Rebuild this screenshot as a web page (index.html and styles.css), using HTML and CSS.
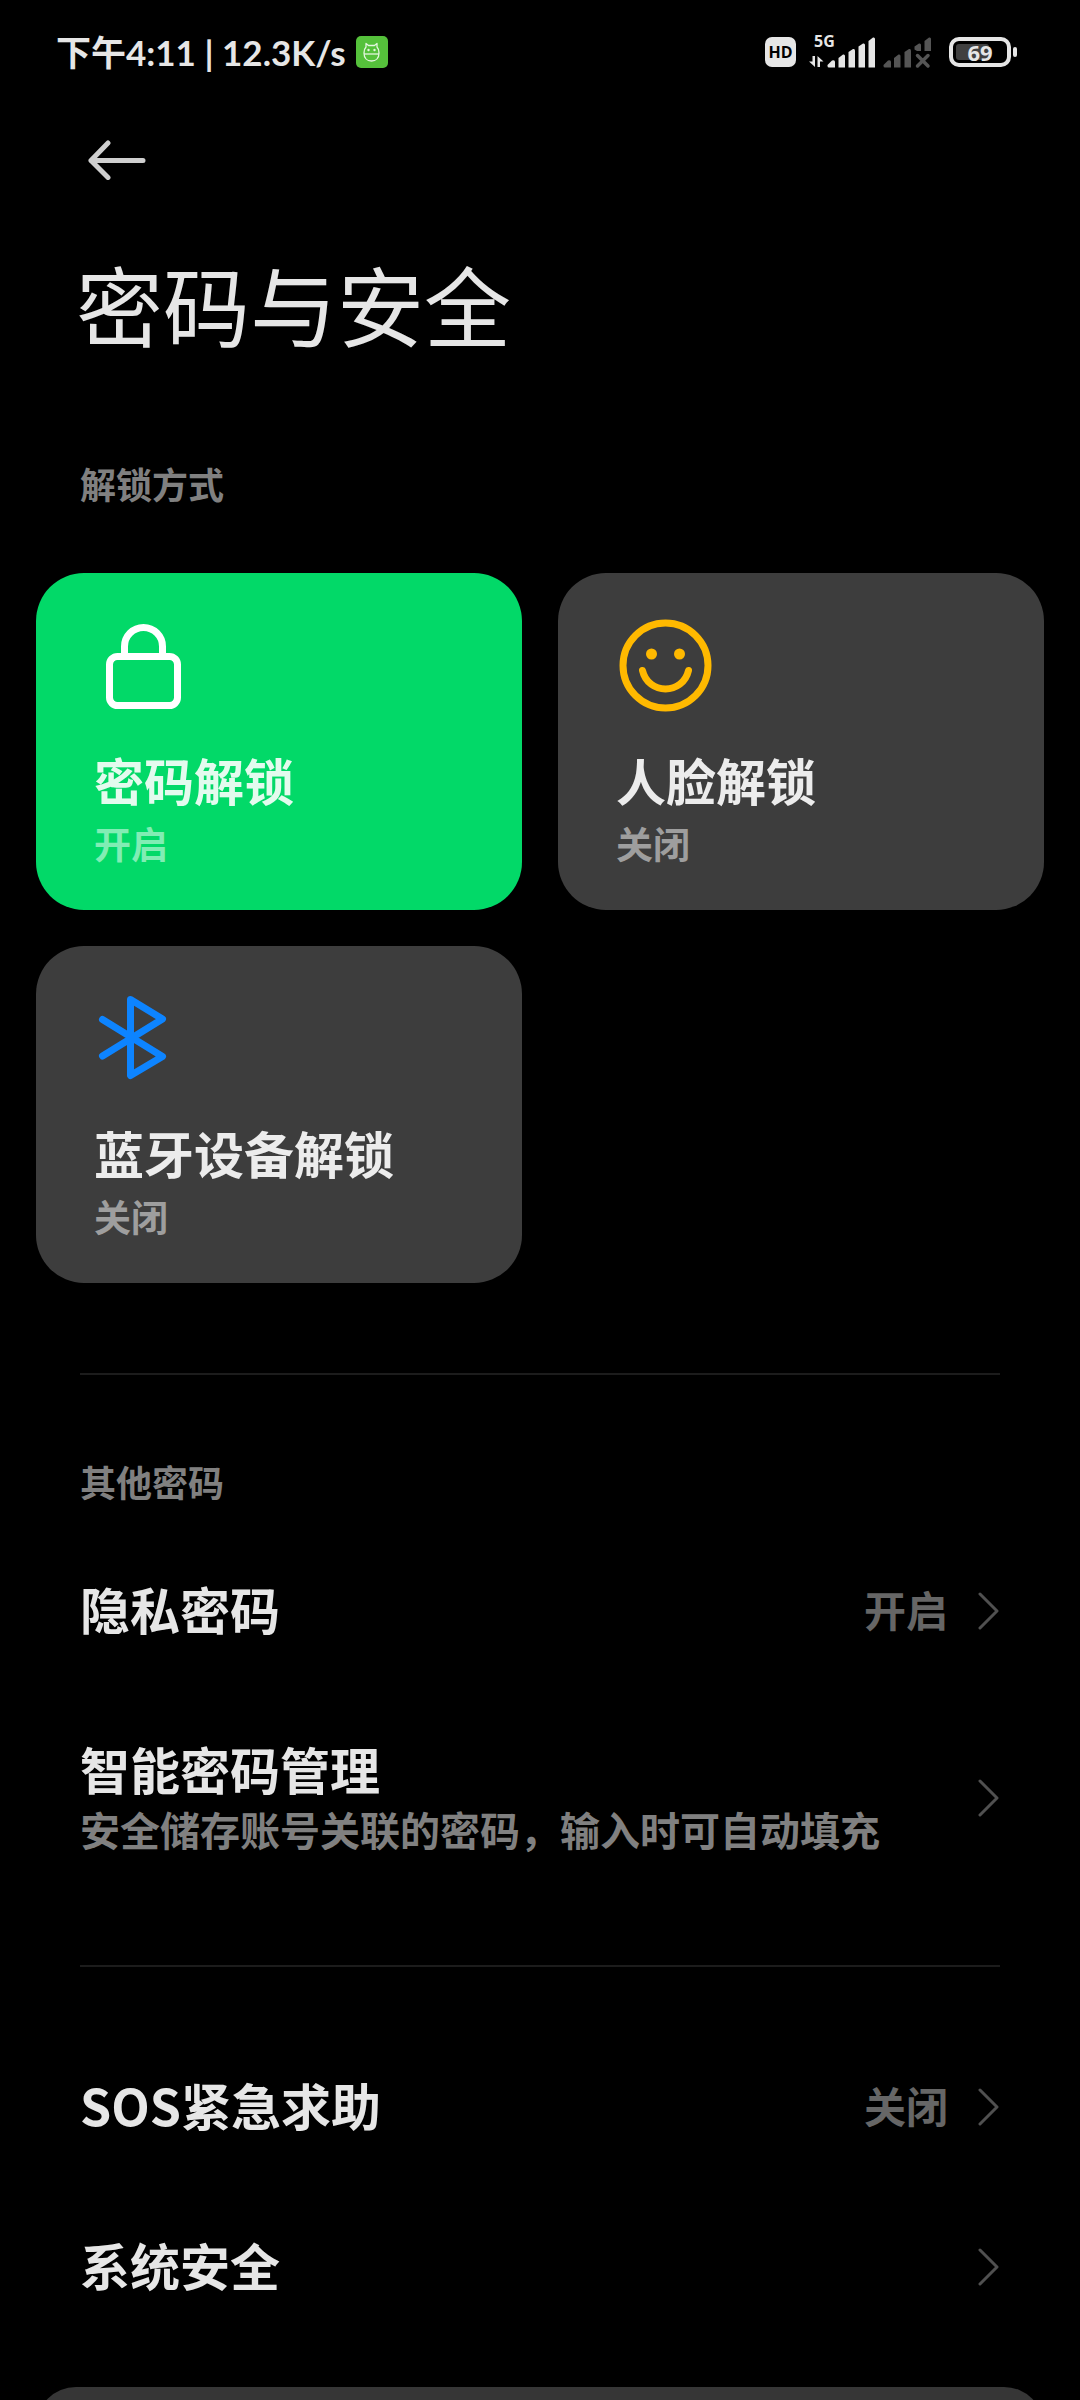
FILE: index.html
```html
<!DOCTYPE html>
<html lang="zh-CN">
<head>
    <meta charset="UTF-8">
    <meta name="viewport" content="width=device-width, initial-scale=1.0">
    <title>密码与安全</title>
    <link rel="stylesheet" href="styles.css">
</head>
<body>
    <div class="status-bar">
        <div class="status-left">
            <span>下午4:11 | 12.3K/s</span>
            <svg class="app-badge" viewBox="0 0 32 32" aria-hidden="true">
                <rect width="32" height="32" rx="5" fill="#55c13b"/>
                <g fill="none" stroke="#e4f6df" stroke-width="1.3" stroke-linejoin="round">
                    <path d="M10 11 L10 7.500 L12.500 9.500 H18.500 L21 7.500 V11 Q23 13 23 17 C23 22 20 25 15.500 25 C11 25 8 22 8 17 Q8 13 10 11Z"/>
                    <path d="M8 18 H23"/>
                </g>
                <circle cx="12.500" cy="14" r="1.200" fill="#e4f6df"/>
                <circle cx="18.500" cy="14" r="1.200" fill="#e4f6df"/>
            </svg>
        </div>
        <div class="status-right">
            <span class="hd">HD</span>
            <svg class="signal" width="68" height="44" viewBox="0 -4 68 44" fill="#e6e6e6">
                <text class="net-type" x="6" y="13">5G</text>
                <path d="M4.500 22 H7 V33 L1 27.500 H4.500Z M9.500 33 V22 L15.500 27.500 H12 V33Z"/>
                <path d="M19.500 31 L24 26.500 Q27 25.500 27 28 V33.500 H21 Q19.500 33.500 19.500 32Z"/>
                <path d="M30.500 24 L35 20.500 Q37 20 37 22 V33.500 H30.500Z"/>
                <path d="M40.500 18 L45 15 Q47 14.500 47 16.500 V33.500 H40.500Z"/>
                <path d="M50.500 12.500 L55 9.500 Q57 9 57 11 V33.500 H50.500Z"/>
                <path d="M60.500 7 L65 3.500 Q67 3 67 5 V33.500 H60.500Z"/>
            </svg>
            <svg class="signal-off" width="48" height="36" viewBox="0 0 48 36" fill="#555">
                <path d="M0.500 31 L5 26.500 Q8 25.500 8 28 V33.500 H2 Q0.500 33.500 0.500 32Z"/>
                <path d="M11 24 L15.500 20.500 Q17.500 20 17.500 22 V33.500 H11Z"/>
                <path d="M21.500 18 L26 15 Q28 14.500 28 16.500 V33.500 H21.500Z"/>
                <path d="M31.500 12.500 L36 9.500 Q38 9 38 11 V17 H34 L31.500 15.500Z"/>
                <path d="M41.500 7 L46 3.500 Q48 3 48 5 V17 H41.500Z"/>
                <path d="M34.500 21.500 L45 32 M45 21.500 L34.500 32" stroke="#555" stroke-width="3.500" stroke-linecap="round"/>
            </svg>
            <div class="battery">
                <div class="battery-body">
                    <div class="battery-level" style="width: 69%"></div>
                    <span class="battery-text">69</span>
                </div>
                <div class="battery-tip"></div>
            </div>
        </div>
    </div>

    <header class="toolbar">
        <button class="back-btn" type="button" aria-label="返回">
            <svg width="58" height="40" viewBox="0 0 58 40" fill="none" stroke="#cfcfcf" stroke-width="5" stroke-linecap="round" stroke-linejoin="round">
                <path d="M55 20.500 H3 M20 3 L3 20.500 L20 37.500"/>
            </svg>
        </button>
    </header>

    <main class="content">
        <h1>密码与安全</h1>

        <section>
            <h2 class="section-label">解锁方式</h2>
            <div class="unlock-grid">
                <button class="unlock-card active" type="button">
                    <svg class="card-icon" viewBox="0 0 100 100" fill="none" stroke="#fff" stroke-width="7">
                        <rect x="15.500" y="40.500" width="68" height="49" rx="8"/>
                        <path d="M30.500 40 V30.500 A19 19 0 0 1 68.500 30.500 V40"/>
                    </svg>
                    <span class="card-title">密码解锁</span>
                    <span class="card-state">开启</span>
                </button>
                <button class="unlock-card" type="button">
                    <svg class="card-icon" viewBox="0 0 100 100" fill="none" stroke="#ffb900" stroke-width="7" stroke-linecap="round">
                        <circle cx="49.500" cy="49.500" r="42.500"/>
                        <path d="M26.500 54.500 C32 79 67 79 72.500 54.500"/>
                        <circle cx="35.500" cy="38" r="5.500" fill="#ffb900" stroke="none"/>
                        <circle cx="63.500" cy="38" r="5.500" fill="#ffb900" stroke="none"/>
                    </svg>
                    <span class="card-title">人脸解锁</span>
                    <span class="card-state">关闭</span>
                </button>
                <button class="unlock-card" type="button">
                    <svg class="card-icon" viewBox="0 0 100 100" fill="none" stroke="#0d84ff" stroke-width="7" stroke-linecap="round" stroke-linejoin="round">
                        <path d="M8.500 30.500 L68.500 67.500 L36.500 86.500 V10.500 L68.500 30 L8.500 67"/>
                    </svg>
                    <span class="card-title">蓝牙设备解锁</span>
                    <span class="card-state">关闭</span>
                </button>
            </div>
        </section>

        <section class="group">
            <h2 class="section-label">其他密码</h2>
            <a class="row" href="#privacy">
                <span class="row-text">
                    <span class="row-title">隐私密码</span>
                </span>
                <span class="row-value">开启</span>
                <svg class="chevron" viewBox="0 0 22 40"><path d="M2 3 L19 20 L2 37"/></svg>
            </a>
            <a class="row" href="#manager">
                <span class="row-text">
                    <span class="row-title">智能密码管理</span>
                    <span class="row-desc">安全储存账号关联的密码，输入时可自动填充</span>
                </span>
                <svg class="chevron" viewBox="0 0 22 40"><path d="M2 3 L19 20 L2 37"/></svg>
            </a>
        </section>

        <section class="group group-plain">
            <a class="row" href="#sos">
                <span class="row-text">
                    <span class="row-title">SOS紧急求助</span>
                </span>
                <span class="row-value">关闭</span>
                <svg class="chevron" viewBox="0 0 22 40"><path d="M2 3 L19 20 L2 37"/></svg>
            </a>
            <a class="row" href="#system">
                <span class="row-text">
                    <span class="row-title">系统安全</span>
                </span>
                <svg class="chevron" viewBox="0 0 22 40"><path d="M2 3 L19 20 L2 37"/></svg>
            </a>
        </section>

        <div class="more-panel"></div>
    </main>
</body>
</html>
```

FILE: styles.css
```css
* {
    box-sizing: border-box;
}

body {
    margin: 0;
    height: 100vh;
    display: flex;
    flex-direction: column;
    background-color: #000;
    color: #e6e6e6;
    font-family: "Noto Sans CJK SC", sans-serif;
}

button {
    border: none;
    padding: 0;
    font-family: inherit;
    text-align: left;
    cursor: pointer;
}

svg {
    display: block;
    flex-shrink: 0;
}

/* status bar */
.status-bar {
    display: flex;
    justify-content: space-between;
    align-items: center;
    height: 104px;
    padding: 0 63px 0 56px;
    flex-shrink: 0;
}

.status-left {
    display: flex;
    align-items: center;
    gap: 10px;
    font-family: Lato, "Noto Sans CJK SC", sans-serif;
    font-size: 35px;
    font-weight: 700;
    line-height: 40px;
}

.app-badge {
    width: 32px;
    height: 32px;
}

.status-right {
    display: flex;
    align-items: center;
    font-family: "Open Sans", sans-serif;
    font-weight: 700;
}

.hd {
    width: 31px;
    height: 30px;
    border-radius: 7px;
    background-color: #e6e6e6;
    color: #000;
    font-size: 16px;
    line-height: 30px;
    text-align: center;
}

.signal {
    margin-left: 12px;
}

.net-type {
    font-size: 16px;
}

.signal-off {
    margin-left: 7px;
}

.battery {
    display: flex;
    align-items: center;
    gap: 2px;
    margin-left: 18px;
}

.battery-body {
    position: relative;
    width: 62px;
    height: 30px;
    padding: 3px;
    border: 4px solid #e6e6e6;
    border-radius: 10px;
}

.battery-level {
    height: 100%;
    border-radius: 3px;
    background-color: #404040;
}

.battery-text {
    position: absolute;
    inset: 0;
    color: #e6e6e6;
    font-size: 22px;
    line-height: 22px;
    text-align: center;
}

.battery-tip {
    width: 4px;
    height: 10px;
    border-radius: 2px;
    background-color: #e6e6e6;
}

/* header */
.toolbar {
    display: flex;
    align-items: center;
    height: 112px;
    padding: 0 88px;
    flex-shrink: 0;
}

.back-btn {
    background: none;
}

.content {
    flex: 1;
    overflow-y: auto;
    scrollbar-width: none;
}

h1 {
    margin: 27px 76px 96px;
    font-size: 87px;
    font-weight: 400;
    line-height: 120px;
}

.section-label {
    margin: 0;
    padding: 0 80px 26px;
    color: #808080;
    font-size: 36px;
    font-weight: 700;
    line-height: 48px;
}

/* unlock cards */
.unlock-grid {
    display: grid;
    grid-template-columns: 1fr 1fr;
    gap: 36px;
    margin: 40px 36px 90px;
}

.unlock-card {
    display: flex;
    flex-direction: column;
    padding: 43px 58px 38px;
    border-radius: 48px;
    background-color: #3d3d3d;
    color: #ececec;
}

.unlock-card.active {
    background-color: #02d968;
    color: #e3fbee;
}

.card-icon {
    width: 100px;
    height: 100px;
    margin-bottom: 28px;
}

.card-title {
    font-size: 50px;
    font-weight: 700;
    line-height: 70px;
}

.card-state {
    color: #9e9e9e;
    font-size: 37px;
    font-weight: 700;
    line-height: 58px;
}

.active .card-state {
    color: #81edb4;
}

/* list rows */
.group {
    padding-bottom: 60px;
}

.group::before {
    content: "";
    display: block;
    height: 2px;
    margin: 0 80px 82px;
    background-color: #1c1c1c;
}

.group-plain {
    padding-bottom: 40px;
}

.group-plain::before {
    margin-bottom: 60px;
}

.row {
    display: flex;
    align-items: center;
    min-height: 160px;
    padding: 43px 80px;
    color: inherit;
    text-decoration: none;
}

.row-text {
    display: flex;
    flex-direction: column;
    flex: 1;
    padding-bottom: 6px;
}

.row-title {
    font-size: 50px;
    font-weight: 700;
    line-height: 68px;
}

.row-desc {
    color: #808080;
    font-size: 40px;
    font-weight: 700;
    line-height: 54px;
}

.row-value {
    margin-right: 30px;
    padding-bottom: 4px;
    color: #666;
    font-size: 42px;
    font-weight: 700;
    line-height: 60px;
}

.chevron {
    width: 22px;
    height: 40px;
    fill: none;
    stroke: #505050;
    stroke-width: 3;
    stroke-linecap: round;
    stroke-linejoin: round;
}

.more-panel {
    height: 200px;
    margin: 0 36px;
    border-radius: 40px;
    background-color: #363636;
}
```
